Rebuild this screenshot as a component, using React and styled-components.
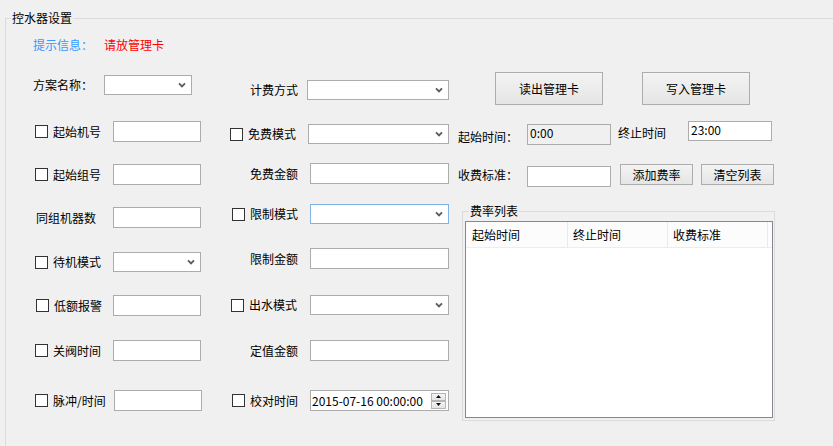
import React from 'react';
import styled, { createGlobalStyle } from 'styled-components';

const FONT = `"Noto Sans CJK SC", "Noto Sans", sans-serif`;

const Global = createGlobalStyle`
  html, body { margin: 0; padding: 0; background: #f0f0f0; overflow: hidden; }
  body { font-family: ${FONT}; font-size: 12px; line-height: 14px; color: #000; }
  #root { width: 833px; height: 446px; overflow: hidden; }
`;

const Group = styled.fieldset`
  box-sizing: border-box;
  margin: ${p => p.$mt}px 0 0 ${p => p.$ml}px;
  padding: 0;
  min-width: 0;
  width: ${p => p.$w}px;
  height: ${p => p.$h}px;
  border: 1px solid #dcdcdc;
`;

const Legend = styled.legend`
  margin-left: ${p => p.$ml}px;
  padding: 0 1px;
  font-size: 12px;
  line-height: 14px;
`;

const HintBar = styled.div`
  display: flex;
  margin: 13px 0 0 27px;
  height: 14px;
`;
const HintLabel = styled.span`
  width: 71px;
  color: #3399ff;
`;
const HintValue = styled.span`
  color: #ff0000;
`;

const Main = styled.div`
  display: flex;
  padding-left: 27px;
`;

const Column = styled.div`
  display: flex;
  flex-direction: column;
  flex: none;
  width: ${p => p.$w}px;
  margin-left: ${p => p.$ml || 0}px;
`;

const Row = styled.div`
  display: flex;
  align-items: ${p => (p.$top ? 'flex-start' : 'center')};
  margin-top: ${p => p.$mt}px;
`;

const LabelCell = styled.div`
  box-sizing: border-box;
  display: flex;
  align-items: center;
  flex: none;
  width: ${p => p.$w}px;
  padding-left: ${p => p.$pl || 0}px;
  margin-left: ${p => p.$ml || 0}px;
  margin-top: ${p => p.$mt || 0}px;
  white-space: nowrap;
  height: 14px;
`;

const CheckBox = styled.span`
  box-sizing: border-box;
  flex: none;
  width: 13px;
  height: 13px;
  border: 1px solid #333333;
  background: #ffffff;
  margin-left: ${p => p.$ml || 0}px;
  margin-right: 5px;
`;

const TextBox = styled.div`
  box-sizing: border-box;
  height: ${p => p.$h || 21}px;
  width: ${p => (p.$w ? `${p.$w}px` : 'auto')};
  flex: ${p => (p.$w ? 'none' : '1')};
  margin-top: ${p => p.$mt || 0}px;
  border: 1px solid #acacac;
  background: ${p => (p.$readOnly ? '#f0f0f0' : '#ffffff')};
  padding: 1px 2px;
  white-space: nowrap;
`;

const Combo = styled.div`
  box-sizing: border-box;
  display: flex;
  align-items: center;
  justify-content: flex-end;
  height: 20px;
  width: ${p => (p.$w ? `${p.$w}px` : 'auto')};
  flex: ${p => (p.$w ? 'none' : '1')};
  border: 1px solid ${p => (p.$focus ? '#7eb4ea' : '#acacac')};
  background: #ffffff;
  padding-right: 5px;
`;

const DatePicker = styled.div`
  box-sizing: border-box;
  display: flex;
  align-items: center;
  flex: 1;
  height: 21px;
  border: 1px solid #acacac;
  background: #ffffff;
  padding-left: 1px;
  white-space: nowrap;
`;

const Spinner = styled.div`
  display: flex;
  flex-direction: column;
  margin-left: auto;
  margin-right: 2px;
`;

const SpinButton = styled.div`
  box-sizing: border-box;
  display: flex;
  align-items: center;
  justify-content: center;
  width: 15px;
  height: 8px;
  border: 1px solid #b5b5b5;
  background: linear-gradient(#f6f6f6, #e4e4e4);
`;

const Button = styled.div`
  box-sizing: border-box;
  display: flex;
  align-items: center;
  justify-content: center;
  flex: none;
  width: ${p => p.$w}px;
  height: ${p => p.$h}px;
  margin-left: ${p => p.$ml || 0}px;
  border: 1px solid #adadad;
  background: linear-gradient(#f3f3f3, #e5e5e5);
  white-space: nowrap;
`;

const ListView = styled.div`
  box-sizing: border-box;
  margin: 3px 0 0 2px;
  width: 308px;
  height: 197px;
  border: 1px solid #828790;
  background: #ffffff;
`;

const ListHeader = styled.div`
  box-sizing: border-box;
  display: flex;
  height: 26px;
  border-bottom: 1px solid #e5eefa;
  background: #fcfcfd;
`;

const HeaderCell = styled.div`
  box-sizing: border-box;
  display: flex;
  align-items: center;
  width: ${p => p.$w}px;
  padding-left: ${p => p.$pl}px;
  border-right: 1px solid #e3ebf6;
  white-space: nowrap;
`;

const Chevron = () => (
  <svg width="8" height="6" viewBox="0 0 8 6">
    <path d="M1 1.3 L4 4.3 L7 1.3" fill="none" stroke="#5c5c5c" strokeWidth="1.9" />
  </svg>
);

const Tri = ({ up }) => (
  <svg width="5" height="3" viewBox="0 0 5 3">
    <path d={up ? 'M0 3 L2.5 0 L5 3 Z' : 'M0 0 L2.5 3 L5 0 Z'} fill="#111" />
  </svg>
);

const leftRows = [
  { mt: 23, label: '方案名称：', lw: 71, ctrl: 'combo' },
  { mt: 26, check: 2, label: '起始机号', ctrl: 'text' },
  { mt: 22, check: 2, label: '起始组号', ctrl: 'text' },
  { mt: 22, label: '同组机器数', pl: 3, ctrl: 'text' },
  { mt: 24, check: 2, label: '待机模式', ctrl: 'combo' },
  { mt: 23, check: 3, label: '低额报警', ctrl: 'text' },
  { mt: 24, check: 2, label: '关阀时间', ctrl: 'text' },
  { mt: 29, check: 2, label: '脉冲/时间', lw: 81, ctrl: 'text' },
];

const midRows = [
  { mt: 28, label: '计费方式', lw: 77, pl: 20, ctrl: 'combo' },
  { mt: 24, check: 0, label: '免费模式', lw: 78, ctrl: 'combo' },
  { mt: 19, label: '免费金额', pl: 20, ctrl: 'text' },
  { mt: 20, check: 2, label: '限制模式', ctrl: 'combo', focus: true },
  { mt: 24, label: '限制金额', pl: 20, ctrl: 'text' },
  { mt: 26, check: 1, label: '出水模式', ctrl: 'combo' },
  { mt: 25, label: '定值金额', pl: 20, ctrl: 'text' },
  { mt: 29, check: 2, label: '校对时间', ctrl: 'date' },
];

function FormRow({ row, ctrlWidth }) {
  const hasCheck = row.check !== undefined;
  return (
    <Row $mt={row.mt}>
      <LabelCell $w={row.lw || 80} $pl={row.pl}>
        {hasCheck && <CheckBox $ml={row.check} />}
        {row.label}
      </LabelCell>
      {row.ctrl === 'text' && <TextBox $w={ctrlWidth} />}
      {row.ctrl === 'combo' && (
        <Combo $w={ctrlWidth} $focus={row.focus}>
          <Chevron />
        </Combo>
      )}
      {row.ctrl === 'date' && (
        <DatePicker>
          2015-07-16 00:00:00
          <Spinner>
            <SpinButton>
              <Tri up />
            </SpinButton>
            <SpinButton>
              <Tri />
            </SpinButton>
          </Spinner>
        </DatePicker>
      )}
    </Row>
  );
}

export default function App() {
  return (
    <>
      <Global />
      <Group $mt={11} $ml={5} $w={840} $h={460}>
        <Legend $ml={5}>控水器设置</Legend>
        <HintBar>
          <HintLabel>提示信息：</HintLabel>
          <HintValue>请放管理卡</HintValue>
        </HintBar>
        <Main>
          <Column $w={197}>
            {leftRows.map((r, i) => (
              <FormRow key={i} row={r} ctrlWidth={88} />
            ))}
          </Column>
          <Column $w={219}>
            {midRows.map((r, i) => (
              <FormRow key={i} row={r} />
            ))}
          </Column>
          <Column $w={316} $ml={9}>
            <Row $mt={20}>
              <Button $w={108} $h={33} $ml={37}>读出管理卡</Button>
              <Button $w={108} $h={33} $ml={39}>写入管理卡</Button>
            </Row>
            <Row $mt={16} $top>
              <LabelCell $w={69} $mt={9}>起始时间：</LabelCell>
              <TextBox $w={84} $mt={3} $readOnly>0:00</TextBox>
              <LabelCell $w={70} $ml={7} $mt={5}>终止时间</LabelCell>
              <TextBox $w={84} $h={20}>23:00</TextBox>
            </Row>
            <Row $mt={19} $top>
              <LabelCell $w={69} $mt={4}>收费标准：</LabelCell>
              <TextBox $w={84} $mt={2} />
              <Button $w={73} $h={21} $ml={9}>添加费率</Button>
              <Button $w={73} $h={21} $ml={8}>清空列表</Button>
            </Row>
            <Group $mt={17} $ml={4} $w={313} $h={217}>
              <Legend $ml={6}>费率列表</Legend>
              <ListView>
                <ListHeader>
                  <HeaderCell $w={102} $pl={6}>起始时间</HeaderCell>
                  <HeaderCell $w={100} $pl={5}>终止时间</HeaderCell>
                  <HeaderCell $w={100} $pl={5}>收费标准</HeaderCell>
                </ListHeader>
              </ListView>
            </Group>
          </Column>
        </Main>
      </Group>
    </>
  );
}
